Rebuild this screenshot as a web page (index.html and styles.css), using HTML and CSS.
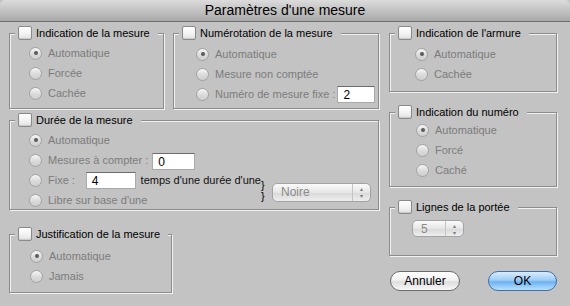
FILE: index.html
```html
<!DOCTYPE html>
<html lang="fr">
<head>
    <meta charset="UTF-8">
    <title>Paramètres d'une mesure</title>
    <link rel="stylesheet" href="styles.css">
</head>
<body>
    <div class="window">
        <div class="titlebar">Paramètres d'une mesure</div>

        <div class="content">
            <!-- Colonne de gauche -->
            <div class="col-left">
                <div class="row-top">
                    <fieldset class="group g-indication">
                        <legend><span class="check"></span>Indication de la mesure</legend>
                        <div class="options">
                            <div class="opt"><span class="radio on"></span>Automatique</div>
                            <div class="opt"><span class="radio"></span>Forcée</div>
                            <div class="opt"><span class="radio"></span>Cachée</div>
                        </div>
                    </fieldset>

                    <fieldset class="group g-numerotation">
                        <legend><span class="check"></span>Numérotation de la mesure</legend>
                        <div class="options">
                            <div class="opt"><span class="radio on"></span>Automatique</div>
                            <div class="opt"><span class="radio"></span>Mesure non comptée</div>
                            <div class="opt"><span class="radio"></span>Numéro de mesure fixe :<span class="field f-fixe">2</span></div>
                        </div>
                    </fieldset>
                </div>

                <fieldset class="group g-duree">
                    <legend><span class="check"></span>Durée de la mesure</legend>
                    <div class="options">
                        <div class="opt"><span class="radio on"></span>Automatique</div>
                        <div class="opt"><span class="radio"></span>Mesures à compter :<span class="field f-compter">0</span></div>
                        <div class="split">
                            <div class="stack">
                                <div class="opt"><span class="radio"></span><span class="lbl-fixe">Fixe :</span><span class="field f-temps">4</span><span class="dark">temps d'une durée d'une</span></div>
                                <div class="opt"><span class="radio"></span>Libre sur base d'une</div>
                            </div>
                            <div class="braces"><span>}</span><span>}</span></div>
                            <div class="popup p-noire"><span class="popup-val">Noire</span><span class="popup-arrows">▴<br>▾</span></div>
                        </div>
                    </div>
                </fieldset>

                <fieldset class="group g-justif">
                    <legend><span class="check"></span>Justification de la mesure</legend>
                    <div class="options">
                        <div class="opt"><span class="radio on"></span>Automatique</div>
                        <div class="opt"><span class="radio"></span>Jamais</div>
                    </div>
                </fieldset>
            </div>

            <!-- Colonne de droite -->
            <div class="col-right">
                <fieldset class="group g-armure">
                    <legend><span class="check"></span>Indication de l'armure</legend>
                    <div class="options">
                        <div class="opt"><span class="radio on"></span>Automatique</div>
                        <div class="opt"><span class="radio"></span>Cachée</div>
                    </div>
                </fieldset>

                <fieldset class="group g-numero">
                    <legend><span class="check"></span>Indication du numéro</legend>
                    <div class="options">
                        <div class="opt"><span class="radio on"></span>Automatique</div>
                        <div class="opt"><span class="radio"></span>Forcé</div>
                        <div class="opt"><span class="radio"></span>Caché</div>
                    </div>
                </fieldset>

                <fieldset class="group g-lignes">
                    <legend><span class="check"></span>Lignes de la portée</legend>
                    <div class="options">
                        <div class="popup p-lignes"><span class="popup-val">5</span><span class="popup-arrows">▴<br>▾</span></div>
                    </div>
                </fieldset>

                <div class="buttons">
                    <button class="btn btn-cancel">Annuler</button>
                    <button class="btn btn-ok">OK</button>
                </div>
            </div>
        </div>
    </div>
</body>
</html>
```

FILE: styles.css
```css
/* Base */
* {
    box-sizing: border-box;
}

body {
    margin: 0;
    background: #c3c3c3;
    font-family: "Liberation Sans", Arial, sans-serif;
    font-size: 11px;
    color: #000;
}

.window {
    width: 570px;
    height: 306px;
    background: #c3c3c3;
    border-radius: 5px 5px 0 0;
    overflow: hidden;
}

/* Barre de titre */
.titlebar {
    height: 22px;
    line-height: 21px;
    text-align: center;
    font-size: 14px;
    background: linear-gradient(#dcdcdc, #bdbdbd 60%, #a9a9a9);
    border-bottom: 1px solid #6f6f6f;
}

.content {
    display: flex;
    gap: 10px;
    padding: 4px 0 0 9px;
}

.col-left {
    width: 370px;
    display: flex;
    flex-direction: column;
}

.col-right {
    width: 168px;
    display: flex;
    flex-direction: column;
}

.row-top {
    display: flex;
    gap: 9px;
}

/* Cadres */
.group {
    margin: 0;
    padding: 0;
    min-width: 0;
    border: 1px solid #8c8c8c;
    box-shadow: inset 1px 1px 0 #f2f2f2, 1px 1px 0 #f2f2f2;
}

.group legend {
    display: flex;
    align-items: center;
    margin-left: 5px;
    padding: 0 8px 0 3px;
    height: 14px;
    background: #c3c3c3;
    white-space: nowrap;
}

.check {
    width: 14px;
    height: 14px;
    margin-right: 4px;
    border: 1px solid #8a8a8a;
    border-radius: 2px;
    background: linear-gradient(#ffffff, #f4f4f4 50%, #e2e2e2);
    box-shadow: inset 0 -1px 1px rgba(0, 0, 0, 0.12);
}

.options {
    padding-left: 19px;
}

.opt {
    display: flex;
    align-items: center;
    height: 20px;
    color: #7c7c7c;
    white-space: nowrap;
}

.radio {
    position: relative;
    flex: none;
    width: 13px;
    height: 13px;
    margin-right: 6px;
    border: 1px solid #a2a2a2;
    border-radius: 50%;
    background: linear-gradient(#f6f6f6, #dadada 55%, #cfcfcf);
}

.radio.on::after {
    content: "";
    position: absolute;
    left: 3.5px;
    top: 3.5px;
    width: 4px;
    height: 4px;
    border-radius: 50%;
    background: #5a5a5a;
}

.dark {
    color: #111;
}

/* Champs texte */
.field {
    display: inline-block;
    height: 17px;
    line-height: 16px;
    padding-left: 5px;
    background: #fff;
    border: 1px solid #a9a9a9;
    border-top-color: #6c6c6c;
    color: #000;
    font-size: 12px;
}

.f-fixe {
    width: 38px;
    margin-left: 2px;
}

.f-compter {
    width: 43px;
    margin-left: 4px;
    margin-top: 2px;
}

.f-temps {
    width: 50px;
    margin-left: 0;
    margin-right: 5px;
    margin-top: 1px;
}

.lbl-fixe {
    width: 38px;
}

/* Bloc durée */
.split {
    display: flex;
    align-items: center;
}

.stack {
    width: 232px;
}

.braces {
    display: flex;
    flex-direction: column;
    width: 11px;
    padding-top: 2px;
    line-height: 11px;
    font-size: 11px;
}

.popup {
    display: flex;
    align-items: center;
    height: 19px;
    border: 1px solid #a3a3a3;
    border-radius: 5px;
    background: linear-gradient(#fafafa, #e6e6e6 50%, #dadada 55%, #eeeeee);
    color: #8a8a8a;
    font-size: 12px;
}

.popup-val {
    flex: 1;
    padding-left: 8px;
}

.popup-arrows {
    width: 18px;
    height: 100%;
    border-left: 1px solid #c4c4c4;
    text-align: center;
    font-size: 6px;
    line-height: 7px;
    padding-top: 2px;
    color: #7a7a7a;
}

.p-noire {
    width: 99px;
    margin-top: 4px;
}

.p-lignes {
    width: 52px;
    height: 17px;
}

/* Tailles des cadres */
.g-indication {
    width: 155px;
    height: 83px;
}

.g-indication .options {
    padding-top: 3px;
}

.g-numerotation {
    width: 206px;
    height: 83px;
}

.g-numerotation .options {
    padding: 4px 0 0 22px;
}

.g-duree {
    width: 370px;
    height: 97px;
    margin-top: 4px;
}

.g-duree .options {
    padding-top: 3px;
}

.g-justif {
    width: 163px;
    height: 66px;
    margin-top: 17px;
}

.g-justif .options {
    padding: 5px 0 0 20px;
}

.g-armure {
    height: 66px;
}

.g-armure .options {
    padding: 4px 0 0 25px;
}

.g-numero {
    height: 82px;
    margin-top: 13px;
}

.g-numero .options {
    padding: 1px 0 0 26px;
}

.g-lignes {
    height: 56px;
    margin-top: 13px;
}

.g-lignes .options {
    padding: 6px 0 0 22px;
}

/* Boutons */
.buttons {
    display: flex;
    justify-content: space-between;
    margin-top: 15px;
    padding-left: 1px;
}

.btn {
    height: 20px;
    border-radius: 10px;
    font-family: "Liberation Sans", Arial, sans-serif;
    font-size: 12px;
    color: #000;
    padding: 0;
}

.btn-cancel {
    width: 70px;
    border: 1px solid #6b6b6b;
    background: linear-gradient(#ffffff, #f2f2f2 45%, #dddddd 55%, #f8f8f8);
}

.btn-ok {
    width: 69px;
    border: 1px solid #3f6fa6;
    background: linear-gradient(#d9ecfc, #9fcdf6 45%, #6cb2f2 55%, #b9e1fe);
}
```
